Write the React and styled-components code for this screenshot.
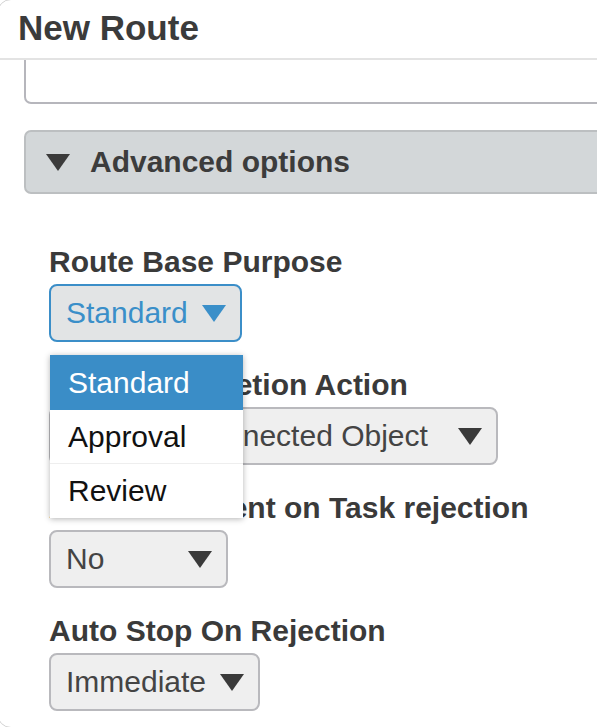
import React from "react";
import styled, { createGlobalStyle } from "styled-components";

const GlobalStyle = createGlobalStyle`
  html, body {
    margin: 0;
    padding: 0;
    background: #ffffff;
    overflow: hidden;
  }
  body {
    font-family: "Liberation Sans", Arial, sans-serif;
  }
  #root {
    overflow: hidden;
  }
`;

const Dialog = styled.div`
  margin: -1px 0 0 -3px;
  width: 720px;
  height: 727px;
  border: 1px solid #d2d2d2;
  border-radius: 14px;
  background: #ffffff;
  overflow: hidden;
`;

const Header = styled.header`
  box-sizing: content-box;
  height: 58px;
  padding-left: 20px;
  border-bottom: 2px solid #e3e3e3;
`;

const Title = styled.h1`
  margin: 0;
  padding-top: 7px;
  font-size: 35px;
  line-height: 41px;
  font-weight: 700;
  color: #3b3b3b;
`;

const Body = styled.div`
  padding-left: 26px;
`;

const NotesBox = styled.div`
  box-sizing: border-box;
  height: 44px;
  border: 2px solid #b6b6bc;
  border-top: none;
  border-radius: 0 0 7px 7px;
  background: #ffffff;
`;

const AdvancedBar = styled.div`
  box-sizing: border-box;
  margin-top: 26px;
  height: 64px;
  border: 2px solid #bcbfc1;
  border-radius: 7px;
  background: #d3d7d9;
  display: flex;
  align-items: center;
  gap: 20px;
  padding-left: 20px;
  font-size: 30px;
  font-weight: 700;
  color: #3c3c3c;
`;

const Fields = styled.div`
  margin: 51px 0 0 25px;
  display: flex;
  flex-direction: column;
  gap: 26px;
`;

const Field = styled.div`
  position: relative;
  display: flex;
  flex-direction: column;
  align-items: flex-start;
`;

const Label = styled.label`
  font-size: 30px;
  line-height: 34px;
  font-weight: 700;
  color: #3a3a3a;
  margin-bottom: 5px;
  white-space: nowrap;
`;

const Select = styled.div`
  box-sizing: border-box;
  width: ${(p) => p.$width}px;
  height: 58px;
  border: 2px solid ${(p) => (p.$active ? "#3b8ec8" : "#b9b9bd")};
  border-radius: 8px;
  background: ${(p) => (p.$active ? "#e2e4e5" : "#efefef")};
  color: ${(p) => (p.$active ? "#3a8fc9" : "#444444")};
  display: flex;
  align-items: center;
  justify-content: space-between;
  padding: 0 14px 0 15px;
  font-size: 30px;
  white-space: nowrap;
`;

const CaretSvg = styled.svg`
  flex: none;
  color: ${(p) => p.$color || "#3a3a3a"};
`;

const Menu = styled.ul`
  position: absolute;
  top: calc(100% + 13px);
  left: 1px;
  width: 193px;
  margin: 0;
  padding: 0;
  list-style: none;
  background: #ffffff;
  box-shadow: 0 1px 6px rgba(0, 0, 0, 0.3);
  z-index: 10;
`;

const MenuItem = styled.li`
  box-sizing: border-box;
  height: ${(p) => p.$h}px;
  display: flex;
  align-items: center;
  padding-left: 18px;
  font-size: 30px;
  color: ${(p) => (p.$selected ? "#ffffff" : "#111111")};
  background: ${(p) => (p.$selected ? "#3a8dc7" : "#ffffff")};
  border-top: ${(p) => (p.$divider ? "1px solid #eeeeee" : "none")};
`;

function Caret({ color }) {
  return (
    <CaretSvg $color={color} width="24" height="17" viewBox="0 0 24 17">
      <polygon points="0,0 24,0 12,17" fill="currentColor" />
    </CaretSvg>
  );
}

export default function App() {
  return (
    <>
      <GlobalStyle />
      <Dialog>
        <Header>
          <Title>New Route</Title>
        </Header>
        <Body>
          <NotesBox />
          <AdvancedBar>
            <Caret color="#3b3b3b" />
            <span>Advanced options</span>
          </AdvancedBar>
          <Fields>
            <Field>
              <Label>Route Base Purpose</Label>
              <Select $width={193} $active>
                <span>Standard</span>
                <Caret color="#3a8fc9" />
              </Select>
              <Menu>
                <MenuItem $h={55} $selected>Standard</MenuItem>
                <MenuItem $h={53}>Approval</MenuItem>
                <MenuItem $h={55} $divider>Review</MenuItem>
              </Menu>
            </Field>
            <Field>
              <Label>Route Completion Action</Label>
              <Select $width={449}>
                <span>Promote Connected Object</span>
                <Caret />
              </Select>
            </Field>
            <Field>
              <Label>Allow Comment on Task rejection</Label>
              <Select $width={179}>
                <span>No</span>
                <Caret />
              </Select>
            </Field>
            <Field>
              <Label>Auto Stop On Rejection</Label>
              <Select $width={211}>
                <span>Immediate</span>
                <Caret />
              </Select>
            </Field>
          </Fields>
        </Body>
      </Dialog>
    </>
  );
}
